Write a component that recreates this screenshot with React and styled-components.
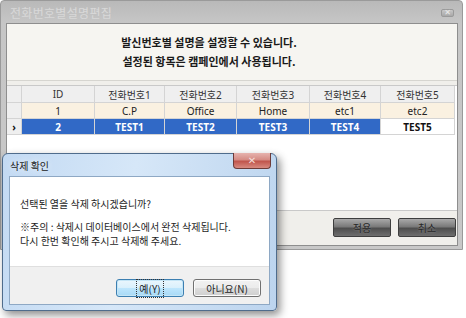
import React from "react";
import styled, { createGlobalStyle } from "styled-components";

const Global = createGlobalStyle`
  html, body { margin: 0; padding: 0; background: #ffffff; }
  body { font-family: "Noto Sans CJK KR", "Noto Sans", sans-serif; }
  * { box-sizing: border-box; }
`;

const Desktop = styled.div`
  position: relative;
  width: 466px;
  height: 318px;
  overflow: hidden;
`;

const MainWindow = styled.div`
  width: 463px;
  height: 250px;
  background: linear-gradient(#b9b9b9, #c6c6c6 22px, #c8c8c8);
  border: 1px solid #9a9a9a;
  border-radius: 4px 4px 0 0;
  padding: 0 4px 3px 5px;
  display: flex;
  flex-direction: column;
`;

const TitleBar = styled.div`
  height: 22px;
  display: flex;
  align-items: center;
  justify-content: space-between;
  padding: 0 4px 0 4px;
`;

const MainTitle = styled.span`
  font-size: 12px;
  color: #d8d8d8;
  letter-spacing: 0.3px;
  text-shadow: 0 0 1px #c4c4c4;
`;

const SmallClose = styled.div`
  width: 13px;
  height: 8px;
  margin-top: 1px;
  border: 1px solid #9a9a9a;
  border-radius: 2px;
  background: linear-gradient(#c8c8c8, #a8a8a8);
  display: flex;
  align-items: center;
  justify-content: center;
  color: #eaeaea;
  font-size: 8px;
  line-height: 1;
  font-family: "DejaVu Sans", sans-serif;
`;

const Client = styled.div`
  flex: 1;
  border: 1px solid #8e8e8e;
  background: #f0efeb;
  display: flex;
  flex-direction: column;
`;

const Header = styled.div`
  height: 57px;
  background: #f6f5f1;
  border-bottom: 1px solid #d6d5d0;
  display: flex;
  flex-direction: column;
  align-items: center;
  justify-content: center;
  gap: 4px;
  padding-right: 46px;
`;

const HeaderLine = styled.div`
  font-size: 11px;
  font-weight: 700;
  color: #1a1a1a;
  line-height: 15px;
`;

const GridBox = styled.div`
  margin-top: 4px;
  height: 126px;
  background: #ffffff;
  border-top: 1px solid #c9c9c9;
  border-bottom: 1px solid #c9c9c9;
`;

const Grid = styled.div`
  display: grid;
  grid-template-columns: 15px 73px 70px 72px 73px 71px 74px;
`;

const Cell = styled.div`
  height: ${(p) => (p.$head ? 17 : 16)}px;
  border-right: 1px solid #d4d4d4;
  border-bottom: 1px solid #d4d4d4;
  display: flex;
  align-items: center;
  justify-content: center;
  font-size: 10px;
  font-family: "Noto Sans", "Noto Sans CJK KR", sans-serif;
  font-weight: ${(p) => (p.$bold ? 700 : 400)};
  color: ${(p) => p.$color || "#222"};
  background: ${(p) => p.$bg || "#ffffff"};
  white-space: nowrap;
`;

const ButtonRow = styled.div`
  flex: 1;
  display: flex;
  justify-content: flex-end;
  align-items: center;
  gap: 7px;
  padding: 0 1px 1px 0;
`;

const DarkButton = styled.div`
  width: 58px;
  height: 19px;
  border: 1px solid #3e3e3e;
  border-radius: 2px;
  background: linear-gradient(#a9a9a9, #7a7a7a 45%, #4e4e4e 55%, #6e6e6e);
  display: flex;
  align-items: center;
  justify-content: center;
  font-size: 10px;
  color: #262626;
  text-shadow: 0 0 2px #9a9a9a;
`;

const Dialog = styled.div`
  position: absolute;
  left: 2px;
  top: 153px;
  width: 275px;
  height: 158px;
  border: 1px solid #4f6c8c;
  border-radius: 6px 6px 4px 4px;
  background: linear-gradient(100deg, #c3daf3, #d6e7f8 45%, #bcd4ee);
  box-shadow: 3px 4px 8px rgba(0, 0, 0, 0.45);
  padding: 0 6px 5px 6px;
  display: flex;
  flex-direction: column;
`;

const DialogTitle = styled.div`
  height: 22px;
  display: flex;
  align-items: center;
  padding-left: 1px;
  font-size: 10px;
  color: #1b1b1b;
  text-shadow: 0 0 6px #ffffff;
`;

const RedClose = styled.div`
  position: absolute;
  right: 5px;
  top: -1px;
  width: 38px;
  height: 16px;
  border: 1px solid #6d3b38;
  border-top: none;
  border-radius: 0 0 4px 4px;
  background: linear-gradient(#e6b3ae, #d58b84 45%, #c0554c 55%, #d88a80);
  display: flex;
  align-items: center;
  justify-content: center;
  color: #f4dedb;
  font-size: 10px;
  font-weight: 700;
  font-family: "DejaVu Sans", sans-serif;
`;

const DialogBody = styled.div`
  flex: 1;
  border: 1px solid #8ea8c4;
  display: flex;
  flex-direction: column;
`;

const Message = styled.div`
  height: 89px;
  background: #ffffff;
  padding: 20px 10px 0 10px;
  font-size: 10px;
  line-height: 14px;
  color: #1e1e1e;
`;

const Para = styled.p`
  margin: 0 0 ${(p) => p.$gap || 0}px 0;
`;

const Footer = styled.div`
  flex: 1;
  background: #f0f0f0;
  border-top: 1px solid #dfdfdf;
  display: flex;
  justify-content: flex-end;
  align-items: flex-start;
  gap: 9px;
  padding: 12px 8px 0 0;
`;

const WinButton = styled.div`
  width: 68px;
  height: 18px;
  border: 1px solid ${(p) => (p.$focus ? "#3c7fb1" : "#707070")};
  border-radius: 3px;
  background: ${(p) =>
    p.$focus
      ? "linear-gradient(#eaf6fd, #d9f0fc 50%, #bee6fd 50%, #a7d9f5)"
      : "linear-gradient(#f2f2f2, #ebebeb 50%, #dddddd 50%, #cfcfcf)"};
  box-shadow: inset 0 0 0 1px ${(p) => (p.$focus ? "#c4e5f6" : "#fcfcfc")};
  display: flex;
  align-items: center;
  justify-content: center;
  font-size: 10px;
  color: #1e1e1e;
`;

const FocusText = styled.span`
  outline: ${(p) => (p.$focus ? "1px dotted #333" : "none")};
  outline-offset: 1px;
  padding: 0 1px;
`;

const headers = ["ID", "전화번호1", "전화번호2", "전화번호3", "전화번호4", "전화번호5"];
const row1 = ["1", "C.P", "Office", "Home", "etc1", "etc2"];
const row2 = ["2", "TEST1", "TEST2", "TEST3", "TEST4", "TEST5"];

export default function App() {
  return (
    <>
      <Global />
      <Desktop>
        <MainWindow>
          <TitleBar>
            <MainTitle>전화번호별설명편집</MainTitle>
            <SmallClose>✕</SmallClose>
          </TitleBar>
          <Client>
            <Header>
              <HeaderLine>발신번호별 설명을 설정할 수 있습니다.</HeaderLine>
              <HeaderLine>설정된 항목은 캠페인에서 사용됩니다.</HeaderLine>
            </Header>
            <GridBox>
              <Grid>
                <Cell $head $bg="#efefef" />
                {headers.map((h) => (
                  <Cell key={h} $head $bg="#efefef" $color="#333">
                    {h}
                  </Cell>
                ))}
                <Cell $bg="#efefef" />
                {row1.map((v) => (
                  <Cell key={v} $bg="#faf1e1">
                    {v}
                  </Cell>
                ))}
                <Cell $bg="#efefef" $bold $color="#111">›</Cell>
                {row2.map((v, i) =>
                  i === row2.length - 1 ? (
                    <Cell key={v} $bold $bg="#ffffff" $color="#111">
                      {v}
                    </Cell>
                  ) : (
                    <Cell key={v} $bold $bg="#3169c6" $color="#ffffff">
                      {v}
                    </Cell>
                  )
                )}
              </Grid>
            </GridBox>
            <ButtonRow>
              <DarkButton>적용</DarkButton>
              <DarkButton>취소</DarkButton>
            </ButtonRow>
          </Client>
        </MainWindow>

        <Dialog>
          <DialogTitle>삭제 확인</DialogTitle>
          <RedClose>✕</RedClose>
          <DialogBody>
            <Message>
              <Para $gap={9}>선택된 열을 삭제 하시겠습니까?</Para>
              <Para>※주의 : 삭제시 데이터베이스에서 완전 삭제됩니다.</Para>
              <Para>다시 한번 확인해 주시고 삭제해 주세요.</Para>
            </Message>
            <Footer>
              <WinButton $focus>
                <FocusText $focus>예(Y)</FocusText>
              </WinButton>
              <WinButton>아니요(N)</WinButton>
            </Footer>
          </DialogBody>
        </Dialog>
      </Desktop>
    </>
  );
}
